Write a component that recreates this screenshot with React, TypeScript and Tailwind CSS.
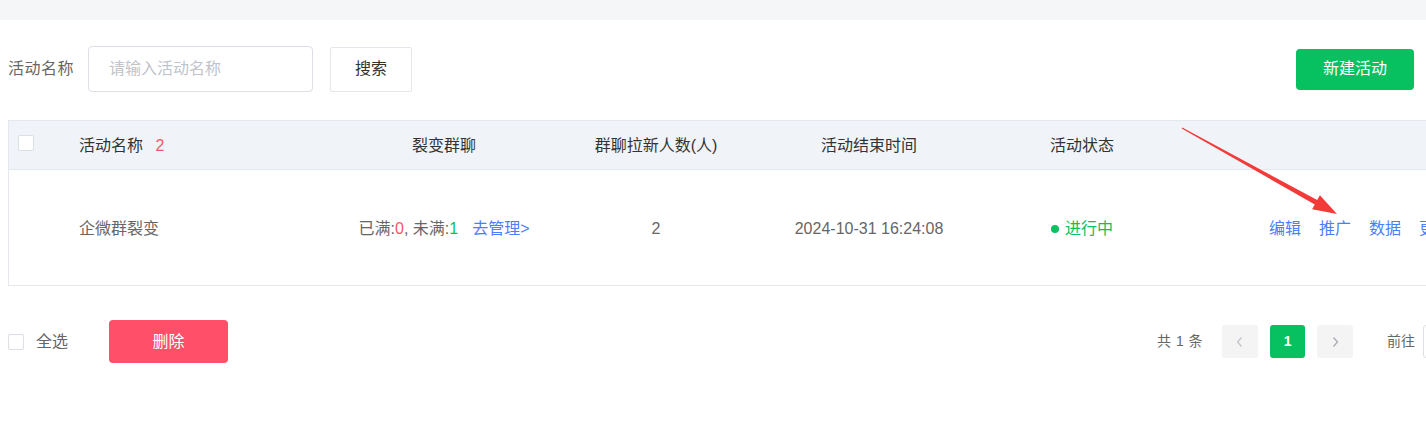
const FONT = "font-['Liberation_Sans','Noto_Sans_CJK_SC',sans-serif]";

function Checkbox({ className = '' }: { className?: string }) {
  return <span className={`inline-block h-4 w-4 rounded-[2px] border border-[#dcdfe6] bg-white ${className}`} />;
}

function PromoArrow() {
  // red annotation arrow pointing at 推广
  return (
    <svg className="pointer-events-none absolute left-0 top-0" width="1426" height="447" viewBox="0 0 1426 447">
      <polygon
        points="1182.3,127.5 1317.2,200.1 1319.9,195.3 1337,214 1312.1,209.3 1314.8,204.5 1181.7,128.5"
        fill="#f23b38"
      />
    </svg>
  );
}

export default function App() {
  return (
    <div className={`relative h-[447px] w-[1426px] overflow-hidden bg-white ${FONT}`}>
      <div className="h-5 bg-[#f5f6f8]" />

      {/* Search bar */}
      <div className="flex items-center pl-2 pr-3 pt-[26px]">
        <span className="text-[16px] tracking-[0.5px] text-[#666]">活动名称</span>
        <div className="ml-[14px] flex h-[46px] w-[225px] items-center rounded-[4px] border border-[#dcdfe6] px-5 text-[16px] text-[#c0c4cc]">
          请输入活动名称
        </div>
        <button
          type="button"
          className="ml-[17px] h-[45px] w-[82px] rounded-[2px] border border-[#e4e6eb] bg-white text-[16px] text-[#333]"
        >
          搜索
        </button>
        <button
          type="button"
          className="ml-auto h-[41px] w-[118px] rounded-[4px] bg-[#07c160] text-[16px] text-white"
        >
          新建活动
        </button>
      </div>

      {/* Table */}
      <div className="ml-2 mt-[28px] w-[1520px] border border-r-0 border-[#e4e7ed] text-[16px]">
        <div className="grid h-[49px] grid-cols-[62px_260px_226px_198px_228px_198px_1fr] items-center border-b border-[#e4e7ed] bg-[#f0f3f8] pt-[2px] text-[#333]">
          <div className="pl-[9px]">
            <Checkbox />
          </div>
          <div className="pl-2">
            活动名称 <span className="ml-2 text-[#f5566a]">2</span>
          </div>
          <div className="text-center">裂变群聊</div>
          <div className="text-center">群聊拉新人数(人)</div>
          <div className="text-center">活动结束时间</div>
          <div className="text-center">活动状态</div>
          <div />
        </div>
        <div className="grid h-[115px] grid-cols-[62px_260px_226px_198px_228px_198px_1fr] items-center pt-[3px] text-[#666]">
          <div />
          <div className="pl-2">企微群裂变</div>
          <div className="text-center">
            已满:<span className="text-[#f5566a]">0</span>, 未满:<span className="text-[#07c160]">1</span>
            <span className="ml-[14px] text-[#4d7cfe]">去管理&gt;</span>
          </div>
          <div className="text-center">2</div>
          <div className="text-center">2024-10-31 16:24:08</div>
          <div className="flex items-center justify-center gap-[6px] text-[#07c160]">
            <span className="h-2 w-2 rounded-full bg-[#07c160]" />
            进行中
          </div>
          <div className="flex gap-[18px] pl-[88px] text-[#4d7cfe]">
            <span>编辑</span>
            <span>推广</span>
            <span>数据</span>
            <span>更多</span>
          </div>
        </div>
      </div>

      {/* Footer: bulk actions + pagination */}
      <div className="mt-[34px] flex w-[1520px] items-center pl-2">
        <Checkbox />
        <span className="ml-[12px] text-[16px] text-[#666]">全选</span>
        <button type="button" className="ml-[41px] h-[43px] w-[119px] rounded-[4px] bg-[#ff4f69] text-[16px] text-white">
          删除
        </button>
        <div className="ml-[929px] flex items-center text-[14px] text-[#666]">
          <span className="tracking-[0.5px]">共 1 条</span>
          <span className="ml-[19px] flex h-[33px] w-9 items-center justify-center rounded-[3px] bg-[#f4f4f5] text-[#c0c4cc]">
            <svg width="12" height="12" viewBox="0 0 12 12" fill="none" stroke="currentColor" strokeWidth="1.3">
              <path d="M7.5 1.5 3.5 6l4 4.5" />
            </svg>
          </span>
          <span className="ml-3 flex h-[33px] w-[35px] items-center justify-center rounded-[3px] bg-[#07c160] font-bold text-white">
            1
          </span>
          <span className="ml-3 flex h-[33px] w-9 items-center justify-center rounded-[3px] bg-[#f4f4f5] text-[#a8abb2]">
            <svg width="12" height="12" viewBox="0 0 12 12" fill="none" stroke="currentColor" strokeWidth="1.3">
              <path d="M4.5 1.5 8.5 6l-4 4.5" />
            </svg>
          </span>
          <span className="ml-[34px]">前往</span>
          <span className="ml-2 h-[33px] w-[48px] rounded-[3px] border border-[#dcdfe6]" />
        </div>
      </div>

      <PromoArrow />
    </div>
  );
}
